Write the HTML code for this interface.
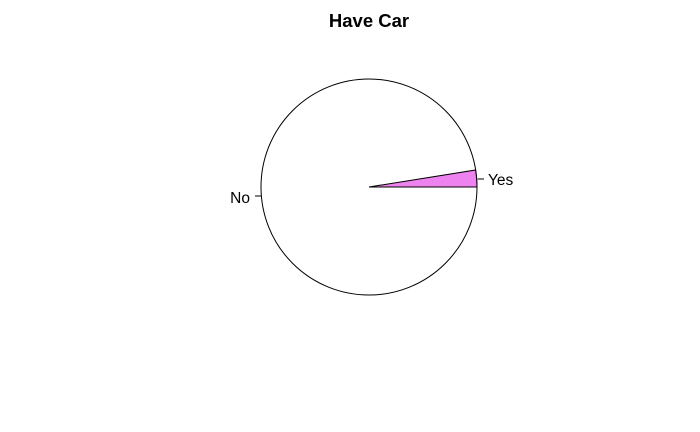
<!DOCTYPE html><html><head><style>body{margin:0;background:#fff}</style></head><body>
<svg width="700" height="432" xmlns="http://www.w3.org/2000/svg" style="display:block">
<text x="369" y="27" text-anchor="middle" font-family="Liberation Sans, sans-serif" font-weight="bold" font-size="18.5">Have Car</text>
<circle cx="369" cy="187" r="108" fill="none" stroke="#000" stroke-width="1"/>
<path d="M369,187 L477,187 A108,108 0 0 0 475.6,170 Z" fill="#ee82ee" stroke="#000" stroke-width="1"/>
<line x1="477.7" y1="179" x2="484" y2="179" stroke="#000"/>
<line x1="261" y1="196" x2="255" y2="196" stroke="#000"/>
<text x="488" y="185" font-family="Liberation Sans, sans-serif" font-size="15.5">Yes</text>
<text x="250" y="203" text-anchor="end" font-family="Liberation Sans, sans-serif" font-size="15.5">No</text>
</svg></body></html>
